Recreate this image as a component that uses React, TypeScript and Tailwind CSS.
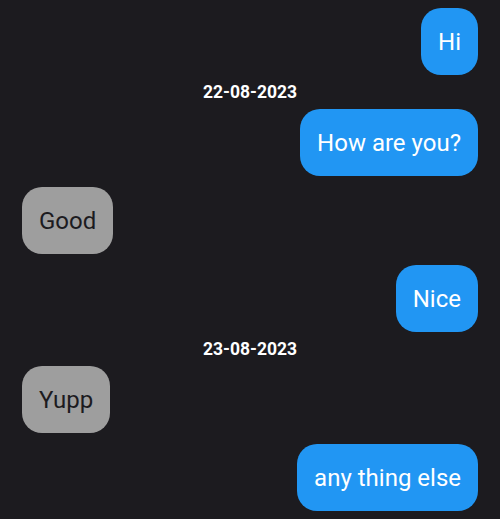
type Message = { kind: "sent" | "received"; text: string } | { kind: "date"; text: string };

const messages: Message[] = [
  { kind: "sent", text: "Hi" },
  { kind: "date", text: "22-08-2023" },
  { kind: "sent", text: "How are you?" },
  { kind: "received", text: "Good" },
  { kind: "sent", text: "Nice" },
  { kind: "date", text: "23-08-2023" },
  { kind: "received", text: "Yupp" },
  { kind: "sent", text: "any thing else" },
];

const Bubble = ({ text, sent }: { text: string; sent: boolean }) => (
  <div className={`flex px-[22px] py-[5.5px] ${sent ? "justify-end" : "justify-start"}`}>
    <div
      className={
        sent
          ? "flex h-[67px] items-center rounded-[20px] bg-[#2196f3] px-[17px] text-[24px] text-white"
          : "flex h-[67px] items-center rounded-[20px] bg-[#9e9e9e] px-[17px] text-[24px] text-[#1c1b1f]"
      }
    >
      {text}
    </div>
  </div>
);

export default function App() {
  return (
    <div
      className="min-h-[519px] w-full bg-[#1c1b1f] pt-[2.5px]"
      style={{ fontFamily: "Roboto, 'Noto Sans', sans-serif" }}
    >
      {messages.map((m, i) =>
        m.kind === "date" ? (
          <div key={i} className="h-[23px] text-center text-[17.5px] font-bold leading-[23px] text-white">
            {m.text}
          </div>
        ) : (
          <Bubble key={i} text={m.text} sent={m.kind === "sent"} />
        )
      )}
    </div>
  );
}
